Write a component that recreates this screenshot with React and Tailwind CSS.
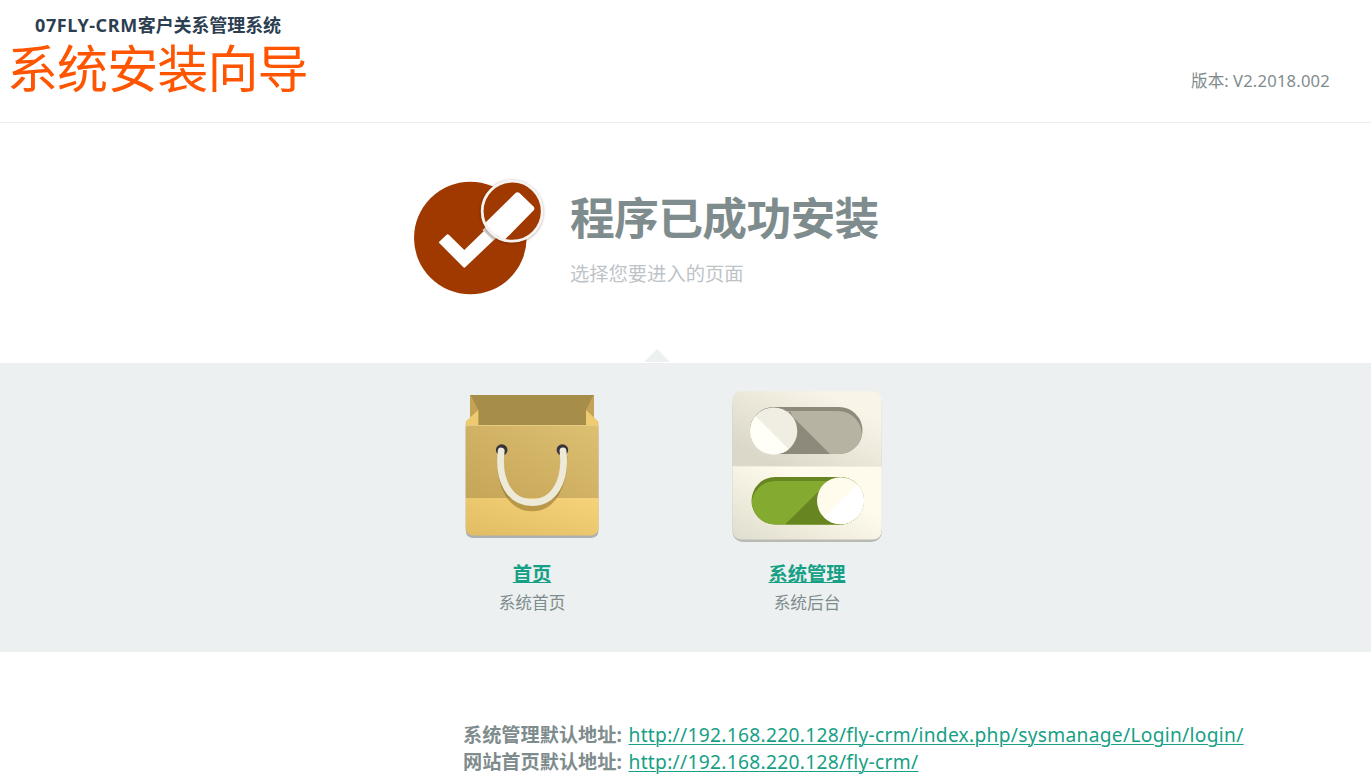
import React from "react";

function CheckIcon() {
  return (
    <svg width="140" height="125" viewBox="410 175 140 125" className="block shrink-0">
      <defs>
        <clipPath id="lens"><circle cx="512.5" cy="211" r="29.3" /></clipPath>
        <filter id="soft" x="-20%" y="-20%" width="140%" height="140%"><feGaussianBlur stdDeviation="1.2" /></filter>
      </defs>
      <circle cx="470.3" cy="238" r="56.3" fill="#a03900" />
      <path d="M439.5 241.5 L446.6 234.8 Q447.7 233.9 448.8 234.8 L464.3 250 L488 227 L498 236 L465.2 267.3 Q464.3 268 463.4 267.2 L439.5 243.3 Q438.5 242.4 439.5 241.5Z" fill="#fff" />
      <path d="M482.5 230 L493 240.5 L497 237 L486.5 226Z" fill="#dcdcdc" />
      <circle cx="511.7" cy="212" r="30.6" fill="none" stroke="#552000" strokeOpacity=".35" strokeWidth="2.5" filter="url(#soft)" />
      <circle cx="512.2" cy="211.2" r="30" fill="#a03900" stroke="#f5f4f2" strokeWidth="2.8" />
      <path clipPath="url(#lens)" d="M482 226 L515.5 193 Q517.5 191.4 519.5 193 L533.5 206.5 Q535.2 208.5 533.5 210.5 L500 244.5Z" fill="#fff" />
    </svg>
  );
}

function BagIcon() {
  return (
    <svg width="150" height="150" viewBox="457 391 150 150" className="block">
      <defs>
        <linearGradient id="bagTop" x1="0" y1="1" x2="1" y2="0"><stop offset="0" stopColor="#c5a558" /><stop offset="1" stopColor="#dec072" /></linearGradient>
        <linearGradient id="bagBottom" x1="0" y1="1" x2="1" y2="0"><stop offset="0" stopColor="#e0bc62" /><stop offset="1" stopColor="#f6d27a" /></linearGradient>
      </defs>
      <path d="M465.7 427 H598.5 V530 Q598.5 538 590.5 538 H473.7 Q465.7 538 465.7 530Z" fill="#adb0b1" />
      <path d="M470 395 H594 V427 H470Z" fill="#c3a356" />
      <path d="M470.5 395 H593.5 L586 410 V426 H478.3 V410Z" fill="#a78d4a" />
      <path d="M478.3 410 V426 H465.7 V421.5Z M586 410 V426 H598.5 V421.5Z" fill="#eeca70" />
      <path d="M465.7 425 H598.5 V498 H465.7Z" fill="url(#bagTop)" />
      <path d="M465.7 425.5 H598.5" stroke="#e5ca83" />
      <path d="M465.7 498 H598.5 V527 Q598.5 535.5 590 535.5 H474.2 Q465.7 535.5 465.7 527Z" fill="url(#bagBottom)" />
      <circle cx="501.7" cy="450" r="5.8" fill="#37343b" />
      <circle cx="562.4" cy="450" r="5.8" fill="#37343b" />
      <path d="M500.5 456 C499 486 511 508 532 508 S564.5 486 564 456" fill="none" stroke="#94772d" strokeOpacity=".6" strokeWidth="6.5" />
      <path d="M501.2 451 C497.5 481 510 502.5 532 502.5 S566.5 481 563 451" fill="none" stroke="#edeada" strokeWidth="6.8" strokeLinecap="round" />
    </svg>
  );
}

function SwitchIcon() {
  return (
    <svg width="150" height="151" viewBox="732 391 150 151" className="block">
      <defs>
        <linearGradient id="panelOff" x1="0" y1="1" x2="1" y2="0"><stop offset=".15" stopColor="#dbd8ca" /><stop offset=".8" stopColor="#f8f4e7" /></linearGradient>
        <linearGradient id="panelOn" x1="0" y1="1" x2="1" y2="0"><stop offset="0" stopColor="#dfddcd" /><stop offset=".65" stopColor="#fffbec" /></linearGradient>
        <clipPath id="offTrack"><rect x="750" y="407" width="112.5" height="47" rx="23.5" /></clipPath>
        <clipPath id="onTrack"><rect x="751.5" y="477" width="112.5" height="47.5" rx="23.7" /></clipPath>
        <clipPath id="offKnob"><circle cx="773.7" cy="431" r="23.6" /></clipPath>
        <clipPath id="onKnob"><circle cx="840.5" cy="500.7" r="23.5" /></clipPath>
      </defs>
      <rect x="732.5" y="393" width="149.3" height="149" rx="10" fill="#b9b9b6" />
      <path d="M732.5 466 V401 Q732.5 391.3 742 391.3 H872 Q881.8 391.3 881.8 401 V466Z" fill="url(#panelOff)" />
      <path d="M732.5 466 H881.8 V529.5 Q881.8 539.5 872 539.5 H742 Q732.5 539.5 732.5 529.5Z" fill="url(#panelOn)" />
      <path d="M732.5 466.5 H881.8" stroke="#f1ecdf" />
      <g clipPath="url(#offTrack)">
        <rect x="750" y="407" width="113" height="48" fill="#8d897b" />
        <rect x="745" y="411" width="117" height="60" rx="24" fill="#b7b3a3" />
        <path d="M790 411 L793 417 L830 454 H770Z" fill="#8d897b" />
      </g>
      <g clipPath="url(#offKnob)">
        <rect x="750" y="407" width="48" height="48" fill="#f0ede2" />
        <path d="M750 407 L798 455 H750Z" fill="#fffff7" transform="translate(-3.5 0)" />
      </g>
      <g clipPath="url(#onTrack)">
        <rect x="751" y="477" width="114" height="48" fill="#678621" />
        <rect x="751.5" y="481" width="117" height="60" rx="24" fill="#85aa30" />
        <path d="M785 524.5 L822 488 L845 477 V525Z" fill="#678621" />
      </g>
      <g clipPath="url(#onKnob)">
        <rect x="816" y="477" width="49" height="48" fill="#fffced" />
        <path d="M821 520 L866 476 V526 H817Z" fill="#fff" />
      </g>
    </svg>
  );
}

function Entry({ icon, title, note }) {
  return (
    <div className="flex w-[275px] flex-col items-center whitespace-nowrap">
      <div className="h-[151px]">{icon}</div>
      <a href="#" className="mt-[18px] block h-[28px] text-[19.3px] leading-[28px] font-bold text-[#16a085] underline decoration-1 underline-offset-[1px]">{title}</a>
      <p className="mt-[3px] text-[16.7px] leading-[24px] text-[#7f8c8d]">{note}</p>
    </div>
  );
}

function Address({ label, url }) {
  return (
    <div className="flex h-[27px] items-center whitespace-nowrap text-[19.2px] leading-[27px]">
      <strong className="w-[165.5px] text-[#7f8c8d]">{label}</strong>
      <a href="#" className="tracking-[0.29px] text-[#16a085] underline decoration-1 underline-offset-[2px]">{url}</a>
    </div>
  );
}

export default function App() {
  return (
    <div className="h-[782px] overflow-hidden bg-white font-['Noto_Sans','Noto_Sans_CJK_SC',sans-serif] text-[#7f8c8d]">
      <header className="flex h-[123px] justify-between border-b border-[#ececec]">
        <div className="whitespace-nowrap">
          <p className="mt-[12px] ml-[35px] flex h-[26px] text-[18px] leading-[26px] font-bold text-[#2c3e50]"><span className="tracking-[0.6px]">07FLY-CRM</span><span className="tracking-[-0.1px]">客户关系管理系统</span></p>
          <h1 className="ml-[7px] h-[60px] text-[51px] leading-[60px] font-normal tracking-[-0.9px] text-[#ff5500]">系统安装向导</h1>
        </div>
        <p className="mt-[69px] mr-[41px] h-[24px] text-[16.6px] leading-[24px]">版本: <span className="tracking-[0.2px]">V2.2018.002</span></p>
      </header>
      <section className="flex h-[226px] pt-[52px] pl-[410px]">
        <CheckIcon />
        <div className="ml-[20px] whitespace-nowrap">
          <h2 className="mt-[13px] h-[60px] text-[44.8px] leading-[60px] font-bold tracking-[-0.7px]">程序已成功安装</h2>
          <p className="mt-[12px] text-[19.3px] leading-[28px] text-[#bdc3c7]">选择您要进入的页面</p>
        </div>
      </section>
      <div className="h-[14px] pl-[644px]">
        <svg width="26" height="13" viewBox="0 0 26 13" className="block"><path d="M13 0 L26 13 H0Z" fill="#ecf0f1" /></svg>
      </div>
      <section className="flex h-[289px] bg-[#ecf0f1] pt-[28px] pl-[394.5px]">
        <Entry icon={<BagIcon />} title="首页" note="系统首页" />
        <Entry icon={<SwitchIcon />} title="系统管理" note="系统后台" />
      </section>
      <footer className="pt-[69px] pl-[463px]">
        <Address label="系统管理默认地址:" url="http://192.168.220.128/fly-crm/index.php/sysmanage/Login/login/" />
        <Address label="网站首页默认地址:" url="http://192.168.220.128/fly-crm/" />
      </footer>
    </div>
  );
}
